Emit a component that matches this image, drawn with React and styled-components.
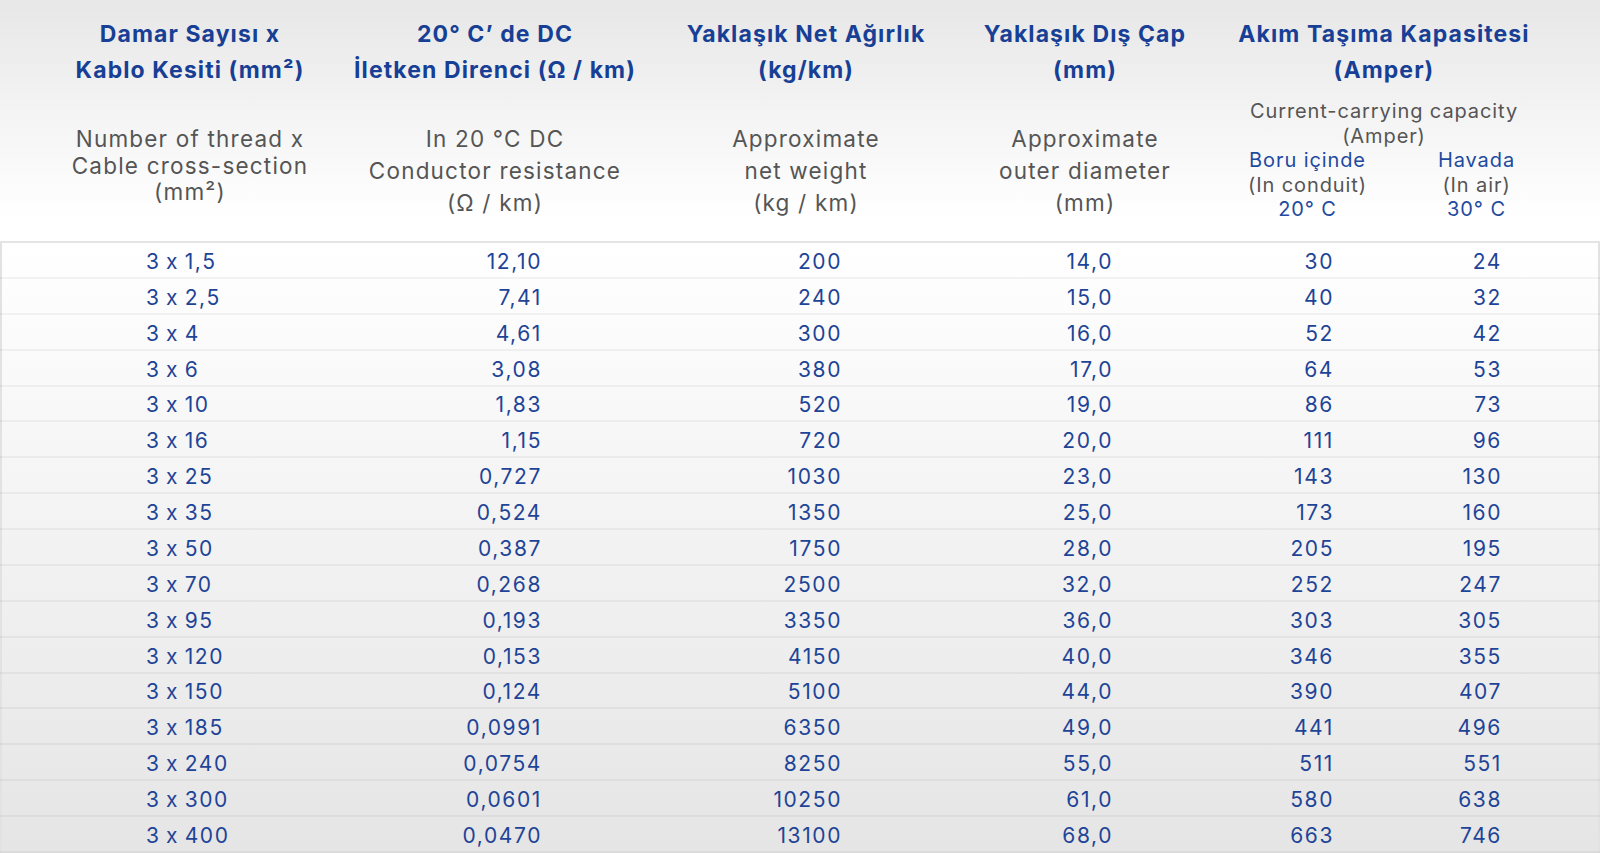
import React from "react";
import styled, { createGlobalStyle } from "styled-components";

const GlobalStyle = createGlobalStyle`
  html, body {
    margin: 0;
    padding: 0;
    background: #ffffff;
  }
  body {
    font-family: Inter, "DejaVu Sans", sans-serif;
    font-feature-settings: "calt" 0;
  }
`;

const COLS = "380px 230px 392px 166px 224px 208px";

const Table = styled.div`
  width: 1600px;
  height: 853px;
  overflow: hidden;
`;

const Head = styled.div`
  display: grid;
  grid-template-columns: ${COLS};
  height: 243px;
  background: linear-gradient(#e7e7e7 0%, #f3f3f3 45%, #ffffff 90%);
  border-bottom: 2px solid #e4e4e4;
  box-sizing: border-box;
`;

const HeadCell = styled.div`
  grid-column: ${(p) => p.$span || "auto"};
  display: flex;
  flex-direction: column;
  align-items: center;
  white-space: nowrap;
  padding-top: 16px;
`;

const Title = styled.div`
  color: #173f95;
  font-weight: 700;
  font-size: 23px;
  letter-spacing: 1.1px;
  line-height: 36px;
  text-align: center;
`;

const Sub = styled.div`
  margin-top: ${(p) => p.$top || 35}px;
  color: #555555;
  font-size: 22.5px;
  letter-spacing: 1.2px;
  line-height: ${(p) => p.$lh || 32}px;
  text-align: center;
`;

const Small = styled.div`
  color: ${(p) => (p.$blue ? "#1e4aa0" : "#555555")};
  font-size: 20px;
  letter-spacing: 0.9px;
  line-height: 24.5px;
  text-align: center;
`;

const SplitRow = styled.div`
  align-self: stretch;
  display: grid;
  grid-template-columns: 1fr 1fr;
  margin: 0 39px 0 55px;
`;

const Body = styled.div`
  background: linear-gradient(#ffffff 0%, #e5e5e5 100%);
  border-left: 2px solid #e2e2e2;
  border-right: 2px solid #e2e2e2;
  box-sizing: border-box;
  height: 610px;
`;

const Row = styled.div`
  display: grid;
  grid-template-columns: ${COLS};
  height: 35.88px;
  border-bottom: 2px solid rgba(0, 0, 0, 0.045);
  box-sizing: border-box;
  margin-left: -2px;
  margin-right: -2px;
`;

const Cell = styled.div`
  display: flex;
  align-items: center;
  justify-content: ${(p) => (p.$left ? "flex-start" : "flex-end")};
  padding-top: 3px;
  padding-left: ${(p) => p.$pl || 0}px;
  padding-right: ${(p) => p.$pr || 0}px;
  color: #1e4497;
  font-size: 21px;
  letter-spacing: 1.6px;
  word-spacing: -2px;
  white-space: pre;
`;

const rows = [
  ["3 x 1,5", "12,10", "200", "14,0", "30", "24"],
  ["3 x 2,5", "7,41", "240", "15,0", "40", "32"],
  ["3 x 4", "4,61", "300", "16,0", "52", "42"],
  ["3 x 6", "3,08", "380", "17,0", "64", "53"],
  ["3 x 10", "1,83", "520", "19,0", "86", "73"],
  ["3 x 16", "1,15", "720", "20,0", "111", "96"],
  ["3 x 25", "0,727", "1030", "23,0", "143", "130"],
  ["3 x 35", "0,524", "1350", "25,0", "173", "160"],
  ["3 x 50", "0,387", "1750", "28,0", "205", "195"],
  ["3 x 70", "0,268", "2500", "32,0", "252", "247"],
  ["3 x 95", "0,193", "3350", "36,0", "303", "305"],
  ["3 x 120", "0,153", "4150", "40,0", "346", "355"],
  ["3 x 150", "0,124", "5100", "44,0", "390", "407"],
  ["3 x 185", "0,0991", "6350", "49,0", "441", "496"],
  ["3 x 240", "0,0754", "8250", "55,0", "511", "551"],
  ["3 x 300", "0,0601", "10250", "61,0", "580", "638"],
  ["3 x 400", "0,0470", "13100", "68,0", "663", "746"],
];

const pads = [0, 68, 160, 55, 58, 98];

export default function App() {
  return (
    <>
      <GlobalStyle />
      <Table>
        <Head>
          <HeadCell>
            <Title>Damar Sayısı x</Title>
            <Title>Kablo Kesiti (mm²)</Title>
            <Sub $top={38} $lh={26.5}>
              Number of thread x
              <br />
              Cable cross-section
              <br />
              (mm²)
            </Sub>
          </HeadCell>
          <HeadCell>
            <Title>20° C’ de DC</Title>
            <Title>İletken Direnci (Ω / km)</Title>
            <Sub>
              In 20 °C DC
              <br />
              Conductor resistance
              <br />
              (Ω / km)
            </Sub>
          </HeadCell>
          <HeadCell>
            <Title>Yaklaşık Net Ağırlık</Title>
            <Title>(kg/km)</Title>
            <Sub>
              Approximate
              <br />
              net weight
              <br />
              (kg / km)
            </Sub>
          </HeadCell>
          <HeadCell>
            <Title>Yaklaşık Dış Çap</Title>
            <Title>(mm)</Title>
            <Sub>
              Approximate
              <br />
              outer diameter
              <br />
              (mm)
            </Sub>
          </HeadCell>
          <HeadCell $span="span 2">
            <Title>Akım Taşıma Kapasitesi</Title>
            <Title>(Amper)</Title>
            <Small style={{ marginTop: 11 }}>Current-carrying capacity</Small>
            <Small>(Amper)</Small>
            <SplitRow>
              <div>
                <Small $blue>Boru içinde</Small>
                <Small>(In conduit)</Small>
                <Small $blue>20° C</Small>
              </div>
              <div>
                <Small $blue>Havada</Small>
                <Small>(In air)</Small>
                <Small $blue>30° C</Small>
              </div>
            </SplitRow>
          </HeadCell>
        </Head>
        <Body>
          {rows.map((r, i) => (
            <Row key={i}>
              <Cell $left $pl={146}>
                {r[0]}
              </Cell>
              {r.slice(1).map((v, j) => (
                <Cell key={j} $pr={pads[j + 1]}>
                  {v}
                </Cell>
              ))}
            </Row>
          ))}
        </Body>
      </Table>
    </>
  );
}
